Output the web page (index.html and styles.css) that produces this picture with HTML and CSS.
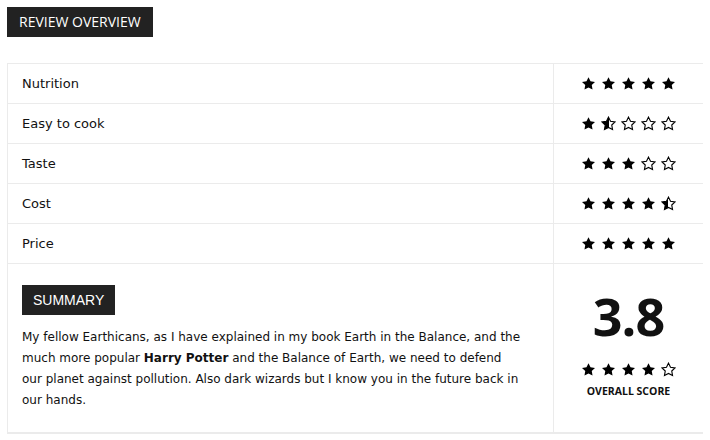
FILE: index.html
```html
<!DOCTYPE html>
<html>
<head>
<meta charset="utf-8">
<link rel="stylesheet" href="styles.css">
</head>
<body>
<svg class="defs" width="0" height="0" aria-hidden="true">
  <defs>
    <linearGradient id="half" x1="0" x2="1" y1="0" y2="0">
      <stop offset="50%" stop-color="#000"/>
      <stop offset="50%" stop-color="#fff"/>
    </linearGradient>
    <symbol id="star" viewBox="0 0 24 24">
      <path d="M12 1.8l3.2 6.6 7.2 1-5.2 5.1 1.25 7.2L12 18.3l-6.45 3.4 1.25-7.2L1.6 9.4l7.2-1z"/>
    </symbol>
  </defs>
</svg>

<div class="title">REVIEW OVERVIEW</div>

<div class="review">
  <div class="row">
    <div class="label">Nutrition</div>
    <div class="stars">
      <svg class="s full"><use href="#star"/></svg><svg class="s full"><use href="#star"/></svg><svg class="s full"><use href="#star"/></svg><svg class="s full"><use href="#star"/></svg><svg class="s full"><use href="#star"/></svg>
    </div>
  </div>
  <div class="row">
    <div class="label">Easy to cook</div>
    <div class="stars">
      <svg class="s full"><use href="#star"/></svg><svg class="s halfs"><use href="#star"/></svg><svg class="s empty"><use href="#star"/></svg><svg class="s empty"><use href="#star"/></svg><svg class="s empty"><use href="#star"/></svg>
    </div>
  </div>
  <div class="row">
    <div class="label">Taste</div>
    <div class="stars">
      <svg class="s full"><use href="#star"/></svg><svg class="s full"><use href="#star"/></svg><svg class="s full"><use href="#star"/></svg><svg class="s empty"><use href="#star"/></svg><svg class="s empty"><use href="#star"/></svg>
    </div>
  </div>
  <div class="row">
    <div class="label">Cost</div>
    <div class="stars">
      <svg class="s full"><use href="#star"/></svg><svg class="s full"><use href="#star"/></svg><svg class="s full"><use href="#star"/></svg><svg class="s full"><use href="#star"/></svg><svg class="s halfs"><use href="#star"/></svg>
    </div>
  </div>
  <div class="row">
    <div class="label">Price</div>
    <div class="stars">
      <svg class="s full"><use href="#star"/></svg><svg class="s full"><use href="#star"/></svg><svg class="s full"><use href="#star"/></svg><svg class="s full"><use href="#star"/></svg><svg class="s full"><use href="#star"/></svg>
    </div>
  </div>
  <div class="row summary-row">
    <div class="summary">
      <div class="badge">SUMMARY</div>
      <p class="text">My fellow Earthicans, as I have explained in my book Earth in the Balance, and the much more popular <b>Harry Potter</b> and the Balance of Earth, we need to defend our planet against pollution. Also dark wizards but I know you in the future back in our hands.</p>
    </div>
    <div class="score">
      <div class="num">3.8</div>
      <div class="stars small">
        <svg class="s full"><use href="#star"/></svg><svg class="s full"><use href="#star"/></svg><svg class="s full"><use href="#star"/></svg><svg class="s full"><use href="#star"/></svg><svg class="s empty"><use href="#star"/></svg>
      </div>
      <div class="caption">OVERALL SCORE</div>
    </div>
  </div>
</div>
</body>
</html>
```
FILE: styles.css
```css
body {
  margin: 7px;
  font-family: "DejaVu Sans", Verdana, sans-serif;
  color: #111;
  background: #fff;
}
.defs { position: absolute; width: 0; height: 0; }
.title {
  display: inline-block;
  background: #222;
  color: #fff;
  font-family: "Open Sans", sans-serif;
  font-size: 14px;
  font-weight: 500;
  height: 30px;
  line-height: 30px;
  padding: 0 12px;
}
.review {
  box-sizing: border-box;
  margin-top: 26px;
  border: 1px solid #ebebeb;
  border-bottom-width: 2px;
  width: 697px;
}
.row {
  display: grid;
  grid-template-columns: 546px 1fr;
  border-top: 1px solid #ebebeb;
}
.row:first-child { border-top: none; }
.label {
  height: 39px;
  line-height: 39px;
  padding-left: 14px;
  font-size: 13px;
  border-right: 1px solid #ebebeb;
}
.stars {
  display: flex;
  justify-content: center;
  align-items: center;
  gap: 5px;
  padding-right: 1px;
}
.s { width: 15px; height: 15px; }
.s.full { fill: #000; }
.s.empty { fill: #fff; stroke: #000; stroke-width: 1.8; }
.s.halfs { fill: url(#half); stroke: #000; stroke-width: 1.8; }
.summary {
  padding: 21px 14px 21px 14px;
  border-right: 1px solid #ebebeb;
}
.badge {
  display: inline-block;
  background: #222;
  color: #fff;
  font-family: "Liberation Sans", Arial, sans-serif;
  font-size: 14px;
  height: 30px;
  line-height: 30px;
  padding: 0 11px;
}
.text {
  margin: 12px 0 0;
  font-size: 12px;
  line-height: 21px;
  max-width: 501px;
}
.score {
  display: flex;
  flex-direction: column;
  align-items: center;
  padding-top: 22px;
}
.num {
  font-family: "Open Sans", sans-serif;
  font-weight: 700;
  font-size: 52px;
  line-height: 60px;
  letter-spacing: -1px;
}
.stars.small { margin-top: 16px; }
.caption {
  margin-top: 7px;
  font-family: "Open Sans", sans-serif;
  font-weight: 700;
  font-size: 10.5px;
  color: #111;
}
```
